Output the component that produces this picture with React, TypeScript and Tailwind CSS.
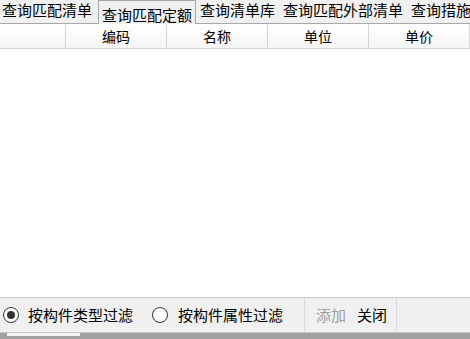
import React, { useState } from 'react';

const tabs = ['查询匹配清单', '查询匹配定额', '查询清单库', '查询匹配外部清单', '查询措施项目'];
const columns = ['编码', '名称', '单位', '单价'];

export default function App() {
  const [active, setActive] = useState(1);
  const [mode, setMode] = useState<'type' | 'attr'>('type');

  return (
    <div
      className="w-[470px] h-[339px] overflow-hidden bg-[#f0f0f0] flex flex-col text-[#000]"
      style={{ fontFamily: '"Noto Sans CJK SC", "Microsoft YaHei", sans-serif' }}
    >
      {/* tab strip */}
      <div className="h-[24px] flex items-end border-b border-[#a8a8a8] whitespace-nowrap shrink-0">
        {tabs.map((t, i) => (
          <button
            key={t}
            onClick={() => setActive(i)}
            className={
              i === active
                ? 'h-[24px] -mb-px px-[3px] pt-[3px] text-[15px] leading-[19px] bg-[#f0f0f0] border border-b-0 border-[#a8a8a8] shrink-0 mr-[2px]'
                : 'h-[23px] px-[2px] pb-[4px] text-[15px] leading-[19px] shrink-0 mr-[4px]'
            }
          >
            {t}
          </button>
        ))}
      </div>

      {/* table */}
      <div className="flex-1 bg-white flex flex-col min-h-0 border-b border-[#c8c8c8]">
        <div className="h-[25px] flex border-b border-[#d5d5d5] bg-gradient-to-b from-white to-[#f5f5f5] text-[14px]">
          <div className="w-[66px] border-r border-[#d5d5d5] shrink-0" />
          {columns.map((c) => (
            <div
              key={c}
              className="w-[101px] shrink-0 border-r border-[#d5d5d5] flex items-center justify-center leading-none"
            >
              {c}
            </div>
          ))}
        </div>
        <div className="flex-1" />
      </div>

      {/* filter row */}
      <div className="h-[34px] flex items-stretch text-[15px] shrink-0">
        <div className="w-[305px] flex items-center border-r border-[#dadada] pl-[3px]">
          <label className="flex items-center cursor-pointer" onClick={() => setMode('type')}>
            <span className="w-[16px] h-[16px] rounded-full border border-[#333] bg-white flex items-center justify-center">
              {mode === 'type' && <span className="w-[8px] h-[8px] rounded-full bg-[#333]" />}
            </span>
            <span className="ml-[9px]">按构件类型过滤</span>
          </label>
          <label className="flex items-center cursor-pointer ml-[19px]" onClick={() => setMode('attr')}>
            <span className="w-[16px] h-[16px] rounded-full border border-[#333] bg-white flex items-center justify-center">
              {mode === 'attr' && <span className="w-[8px] h-[8px] rounded-full bg-[#333]" />}
            </span>
            <span className="ml-[10px]">按构件属性过滤</span>
          </label>
        </div>
        <div className="w-[92px] flex items-center border-r border-[#dadada] pl-[11px] gap-[11px]">
          <span className="text-[#a0a0a0]">添加</span>
          <span>关闭</span>
        </div>
        <div className="flex-1" />
      </div>

      {/* bottom bar */}
      <div className="h-[7px] shrink-0 border-t border-[#c8c8c8] bg-[#a0a0a0] flex">
        <div className="ml-[7px] w-[73px] h-[3px] bg-[#f5f5f5]" />
      </div>
    </div>
  );
}
